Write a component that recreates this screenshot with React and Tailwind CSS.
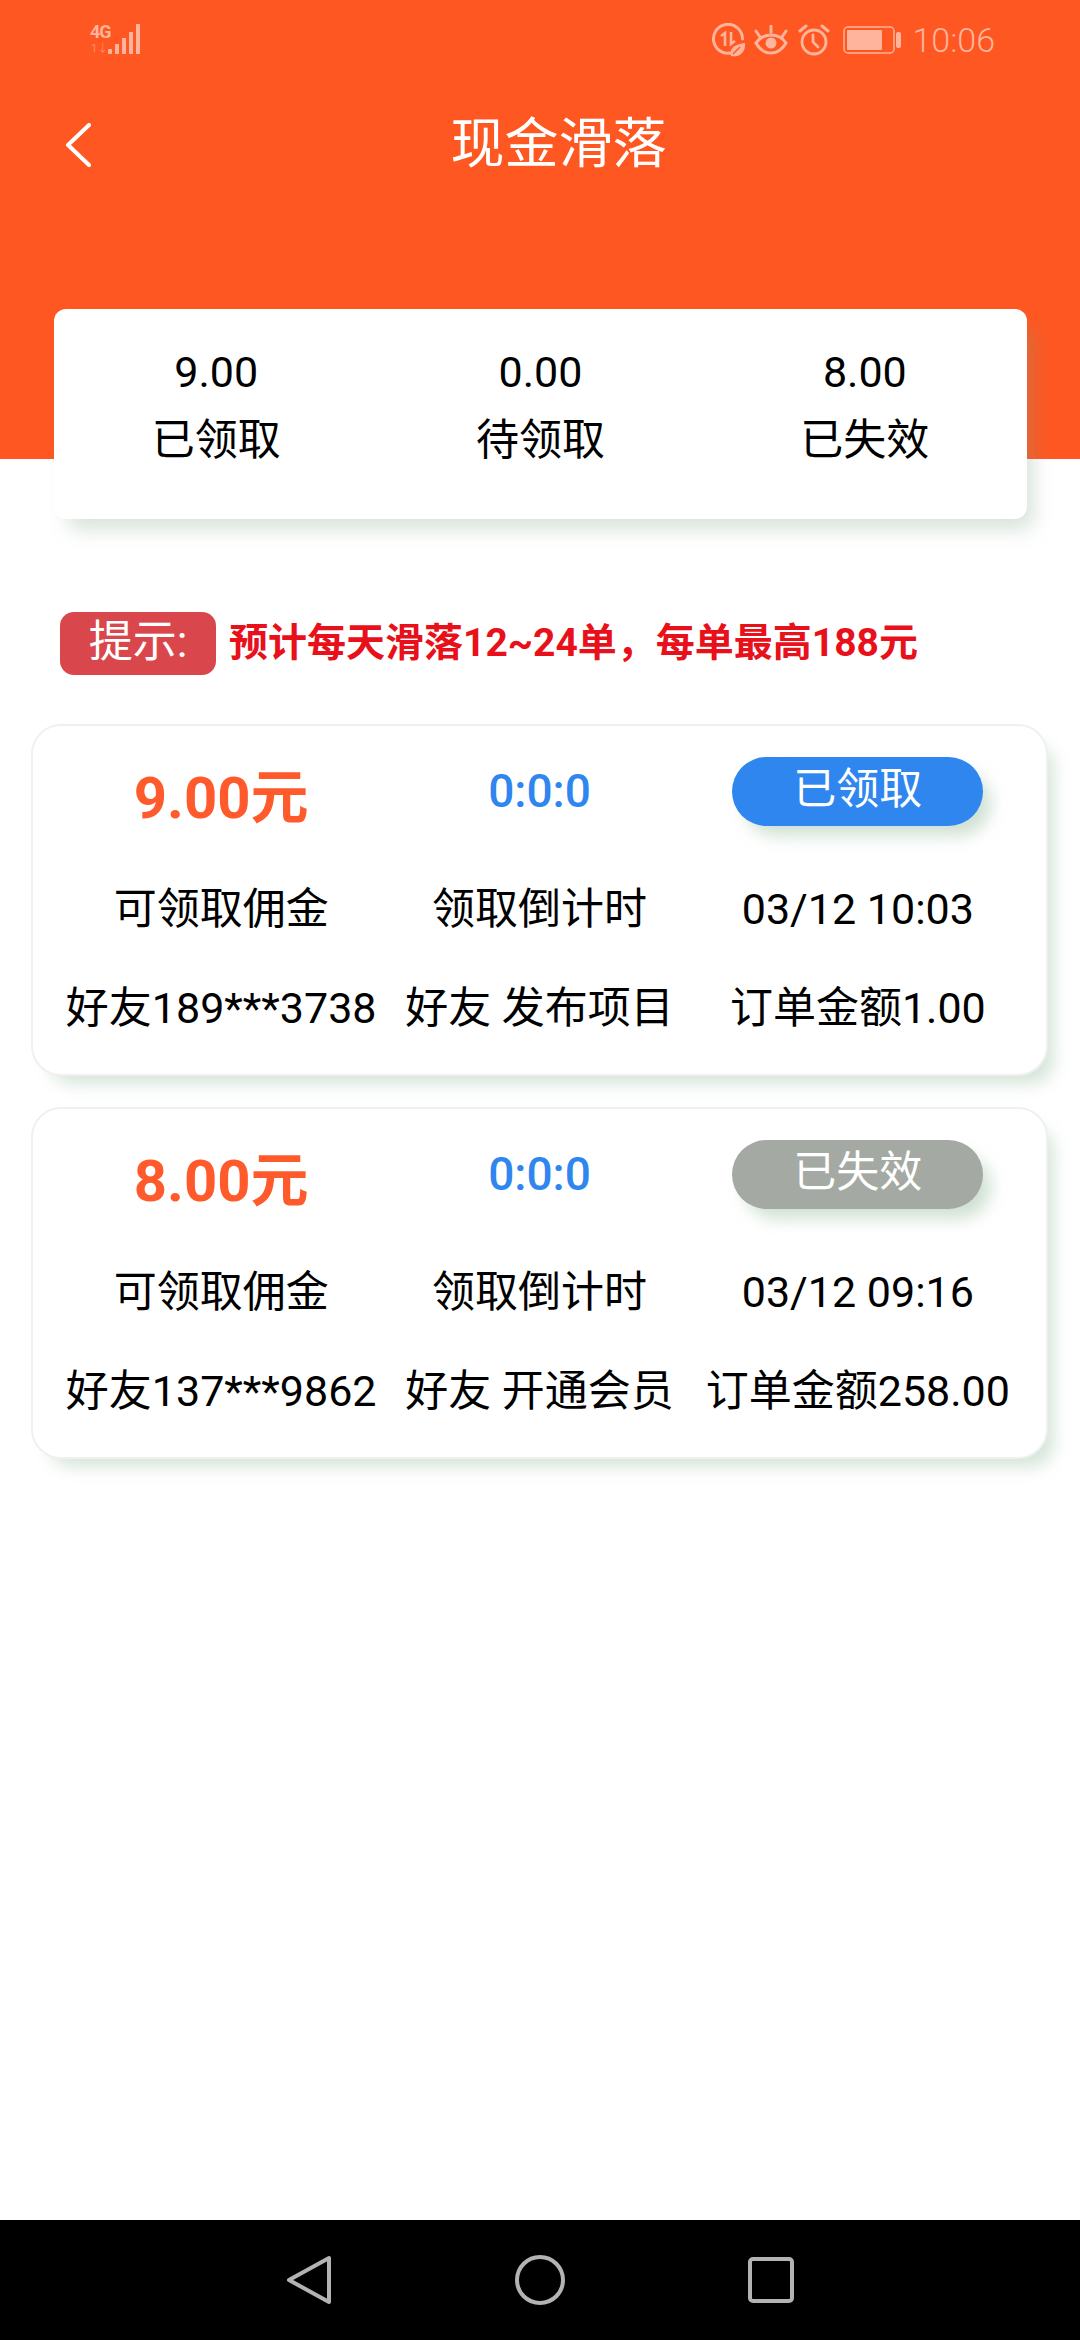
import React from 'react';

const summary = [
  { value: '9.00', label: '已领取' },
  { value: '0.00', label: '待领取' },
  { value: '8.00', label: '已失效' },
];

const orders = [
  {
    amount: '9.00元',
    status: '已领取',
    statusClass: 'bg-[#2e86ee]',
    time: '03/12 10:03',
    friend: '好友189***3738',
    action: '好友 发布项目',
    total: '订单金额1.00',
  },
  {
    amount: '8.00元',
    status: '已失效',
    statusClass: 'bg-[#a5a9a3]',
    time: '03/12 09:16',
    friend: '好友137***9862',
    action: '好友 开通会员',
    total: '订单金额258.00',
  },
];

const SignalIcon = () => (
  <div className="relative h-[32px] w-[52px]">
    <span className="absolute left-0 top-[-1px] text-[18px] font-bold leading-[18px] tracking-[-1px] text-[#ffb49b]">4G</span>
    <span className="absolute left-[1px] top-[19px] text-[11px] leading-[12px] text-[#ff8e68]">1↓</span>
    <svg width="52" height="32" viewBox="0 0 52 32" className="absolute left-0 top-0">
      <g fill="#ffb49b">
        <rect x="18" y="25" width="4" height="5" rx="1" />
        <rect x="25" y="20" width="4" height="10" />
        <rect x="32" y="14" width="4" height="16" />
        <rect x="39" y="8" width="4" height="22" />
        <rect x="46" y="0" width="4" height="30" />
      </g>
    </svg>
  </div>
);

const DataSaverIcon = () => (
  <svg width="34" height="34" viewBox="0 0 34 34" fill="none" stroke="#ffb49b" strokeWidth="3">
    <path d="M24 28.5A14.500 14.500 0 1 1 31.500 16" strokeLinecap="round" />
    <path d="M10 13l4-3v13M20 9v12l4-3" strokeWidth="2.600" />
    <path d="M20 33c-2-7 3-12 14-13 1 8-5 15-14 13z" fill="#ffb49b" stroke="none" />
    <path d="M22 31l7-7" stroke="#ff5722" strokeWidth="1.400" />
  </svg>
);

const EyeIcon = () => (
  <svg width="34" height="30" viewBox="0 0 34 30" fill="none" stroke="#ffb49b" strokeWidth="3" strokeLinecap="round">
    <path d="M2 18c4-6 9-8 15-8s11 2 15 8c-4 7-9 10-15 10s-11-3-15-10z" />
    <circle cx="17" cy="18" r="5.500" fill="#ffb49b" stroke="none" />
    <path d="M2 6l4 6M17 1v6M32 6l-4 6" strokeWidth="3" />
  </svg>
);

const AlarmIcon = () => (
  <svg width="32" height="32" viewBox="0 0 32 32" fill="none" stroke="#ffb49b" strokeWidth="2.800" strokeLinecap="round">
    <circle cx="16" cy="18" r="12" />
    <path d="M15 11v7l5 5" />
    <path d="M2 7l6-5M30 7l-6-5" strokeWidth="3" />
  </svg>
);

const BatteryIcon = () => (
  <svg width="58" height="28" viewBox="0 0 58 28" fill="none">
    <rect x="1" y="1" width="50" height="26" rx="4" stroke="#ffb49b" strokeWidth="1.500" />
    <rect x="4" y="4" width="35" height="20" rx="1" fill="#ffb49b" />
    <rect x="53" y="6" width="5" height="16" rx="2" fill="#ffb49b" />
  </svg>
);

const StatusBar = () => (
  <div className="flex h-[80px] items-center justify-between pl-[90px] pr-[85px]">
    <SignalIcon />
    <div className="flex items-center">
      <DataSaverIcon />
      <div className="ml-[9px]"><EyeIcon /></div>
      <div className="ml-[10px]"><AlarmIcon /></div>
      <div className="ml-[13px]"><BatteryIcon /></div>
      <span className="ml-[11px] text-[34px] font-light leading-none text-[#ffb49b]">10:06</span>
    </div>
  </div>
);

const NavButton = () => (
  <svg width="26" height="44" viewBox="0 0 26 44" fill="none" stroke="#fff" strokeWidth="4" strokeLinecap="round" strokeLinejoin="round">
    <path d="M24 2L3 22l21 20" />
  </svg>
);

const OrderCard = ({ order }) => (
  <div className="h-[352px] rounded-[30px] border-2 border-[#f0f0f0] bg-white px-[29px] pt-[29px] shadow-[12px_14px_16px_-6px_rgba(120,170,130,0.3)]">
    <div className="grid h-[69px] grid-cols-3 items-center text-center">
      <div className="pt-[14px] text-[58px] font-bold leading-none text-[#ff5a2b]">{order.amount}</div>
      <div className="text-[46px] font-medium leading-none text-[#2e86ee]">0:0:0</div>
      <div className={`mx-auto flex h-[69px] w-[251px] items-center justify-center rounded-full pb-[4px] text-[43px] leading-none text-white shadow-[10px_12px_16px_-2px_rgba(120,170,130,0.35)] ${order.statusClass}`}>
        {order.status}
      </div>
    </div>
    <div className="mt-[55px] grid h-[60px] grid-cols-3 items-center text-center text-[43px] leading-none text-black">
      <div>可领取佣金</div>
      <div>领取倒计时</div>
      <div>{order.time}</div>
    </div>
    <div className="mt-[39px] grid h-[60px] grid-cols-3 items-center text-center text-[43px] leading-none text-black">
      <div className="whitespace-nowrap">{order.friend}</div>
      <div className="whitespace-nowrap">{order.action}</div>
      <div className="whitespace-nowrap">{order.total}</div>
    </div>
  </div>
);

const App = () => {
  return (
    <div className="flex h-[2340px] w-[1080px] flex-col overflow-hidden bg-white font-['Roboto','Noto_Sans_CJK_SC',sans-serif]">
      <div className="h-[459px] bg-[#ff5722]">
        <StatusBar />
        <div className="flex h-[130px] items-center pl-[65px] pr-[54px]">
          <NavButton />
          <div className="flex-1 text-center text-[54px] leading-none text-white">现金滑落</div>
        </div>
      </div>

      <div className="ml-[54px] mr-[53px] -mt-[150px] grid h-[210px] grid-cols-3 rounded-[12px] bg-white pt-[42px] text-center text-[43px] leading-none text-black shadow-[10px_14px_20px_-4px_rgba(120,160,130,0.3)]">
        {summary.map(item => (
          <div key={item.label}>
            <div className="h-[46px]">{item.value}</div>
            <div className="mt-[22px]">{item.label}</div>
          </div>
        ))}
      </div>

      <div className="ml-[60px] mt-[93px] flex items-center">
        <div className="flex h-[63px] w-[156px] items-center justify-center rounded-[14px] bg-[#d9474c] pb-[4px] text-[44px] leading-none text-white">提示:</div>
        <div className="ml-[13px] text-[39px] font-bold leading-none text-[#e8101a]">预计每天滑落12~24单，每单最高188元</div>
      </div>

      <div className="ml-[31px] mr-[32px] mt-[49px] flex flex-col gap-[31px]">
        {orders.map(order => (
          <OrderCard key={order.friend} order={order} />
        ))}
      </div>

      <div className="mt-auto flex h-[120px] items-center justify-between bg-black pl-[286px] pr-[286px]">
        <svg width="46" height="50" viewBox="0 0 46 50" fill="none" stroke="#b3b3b3" strokeWidth="4" strokeLinejoin="round">
          <path d="M43 3v44L3 25z" />
        </svg>
        <svg width="50" height="50" viewBox="0 0 50 50" fill="none" stroke="#b3b3b3" strokeWidth="4">
          <circle cx="25" cy="25" r="23" />
        </svg>
        <svg width="46" height="46" viewBox="0 0 46 46" fill="none" stroke="#b3b3b3" strokeWidth="4" strokeLinejoin="round">
          <rect x="2" y="2" width="42" height="42" rx="3" />
        </svg>
      </div>
    </div>
  );
};

export default App;
